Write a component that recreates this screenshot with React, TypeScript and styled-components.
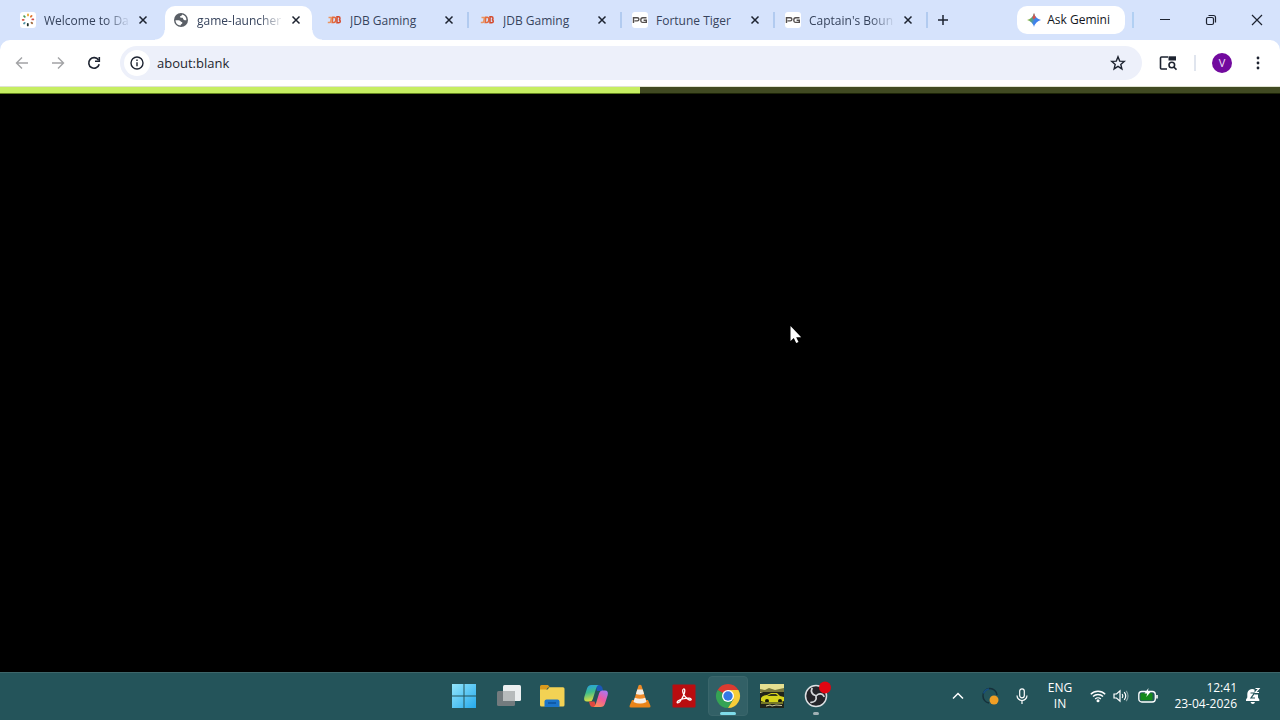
import React from "react";
import styled, { createGlobalStyle, css } from "styled-components";

const GlobalStyle = createGlobalStyle`
  * { box-sizing: border-box; }
  body { margin: 0; background: #000; font-family: "Open Sans", "Noto Sans", sans-serif; }
  button, input { font-family: inherit; margin: 0; }
`;

const Desktop = styled.div`
  display: grid;
  grid-template-rows: auto auto 1fr auto;
  min-height: 100vh;
`;

const TabStrip = styled.header`
  display: flex;
  height: 40px;
  padding-left: 9px;
  background: #d6e3fc;
`;

const TabList = styled.nav`
  display: flex;
  flex: 0 1 918px;
  min-width: 0;
`;

const Tab = styled.div<{ $divider?: boolean }>`
  position: relative;
  flex: 1 1 0;
  min-width: 0;
  display: flex;
  padding: 6px 3px 0;
  ${(p) =>
    p.$divider &&
    css`
      &::after {
        content: "";
        position: absolute;
        right: -1px;
        top: 12px;
        width: 2px;
        height: 16px;
        background: #b2cbf0;
      }
    `}
`;

const TabBody = styled.div<{ $active?: boolean }>`
  position: relative;
  flex: 1;
  min-width: 0;
  display: flex;
  align-items: center;
  height: 34px;
  padding: 0 8px 6px;
  border-radius: 10px 10px 0 0;
  ${(p) =>
    p.$active &&
    css`
      background: #fff;
      &::before,
      &::after {
        content: "";
        position: absolute;
        bottom: 0;
        width: 10px;
        height: 10px;
      }
      &::before {
        left: -10px;
        background: radial-gradient(circle at 0 0, transparent 9px, #fff 10px);
      }
      &::after {
        right: -10px;
        background: radial-gradient(circle at 100% 0, transparent 9px, #fff 10px);
      }
    `}
`;

const TabLink = styled.a<{ $fade?: boolean }>`
  display: flex;
  align-items: center;
  gap: 8px;
  flex: 1;
  min-width: 0;
  color: #36435c;
  font-size: 12px;
  line-height: 16px;
  text-decoration: none;
  svg { flex: none; }
  span {
    flex: 1;
    padding-top: 2px;
    overflow: hidden;
    white-space: nowrap;
    ${(p) => p.$fade && css`mask-image: linear-gradient(90deg, #000 70%, transparent);`}
  }
`;

const IconButton = styled.button<{ $w?: number; $h?: number }>`
  display: flex;
  align-items: center;
  justify-content: center;
  flex: none;
  width: ${(p) => p.$w ?? 16}px;
  height: ${(p) => p.$h ?? 16}px;
  padding: 0;
  border: 0;
  background: none;
  color: #1d2330;
`;

const CloseButton = styled(IconButton)`
  margin-left: 4px;
`;

const WindowTools = styled.div`
  display: flex;
  align-items: center;
  margin-left: auto;
`;

const GeminiButton = styled.button`
  display: flex;
  align-items: center;
  gap: 5px;
  height: 28px;
  padding: 0 15px 0 9px;
  border: 0;
  border-radius: 10px;
  background: #fff;
  color: #12151c;
  font-size: 12px;
  font-weight: 500;
  line-height: 16px;
  white-space: nowrap;
`;

const Separator = styled.span<{ $soft?: boolean }>`
  flex: none;
  width: 2px;
  height: 16px;
  margin: ${(p) => (p.$soft ? "0 16px 0 0" : "0 8px 0 7px")};
  background: ${(p) => (p.$soft ? "#e0e5ee" : "#b2d0f3")};
`;

const ToolbarBack = styled.div`
  background: #d6e3fc;
`;

const Toolbar = styled.div`
  display: flex;
  align-items: center;
  height: 47px;
  padding: 0 4px;
  border-bottom: 1px solid #dfe3d2;
  border-radius: 10px 10px 0 0;
  background: #fff;
`;

const AddressBar = styled.form`
  display: flex;
  align-items: center;
  flex: 1;
  height: 34px;
  margin-left: 8px;
  padding: 0 6px 0 4px;
  border-radius: 17px;
  background: #edf0fa;
`;

const SiteInfo = styled(IconButton)`
  border-radius: 50%;
  background: #fff;
`;

const AddressInput = styled.input`
  flex: 1;
  min-width: 0;
  margin-left: 7px;
  padding: 0;
  border: 0;
  outline: 0;
  background: none;
  color: #24262e;
  font-size: 13px;
  line-height: 20px;
`;

const Avatar = styled.button`
  flex: none;
  width: 20px;
  height: 20px;
  margin-right: 8px;
  padding: 0;
  border: 0;
  border-radius: 50%;
  background: #720a9e;
  color: #f3e3fa;
  font-size: 11px;
  line-height: 20px;
`;

const Page = styled.main`
  position: relative;
  background: #000;
`;

const Progress = styled.div`
  height: 7px;
  background: #414a22;
  border-bottom: 1px solid #1c2407;
`;

const ProgressFill = styled.div`
  height: 7px;
  background: #c6ee62;
  border-bottom: 1px solid #64851f;
`;

const Cursor = styled.svg`
  position: absolute;
  left: 61.7%;
  top: 239px;
`;

const Taskbar = styled.footer`
  display: grid;
  grid-template-columns: 1fr auto 1fr;
  align-items: center;
  height: 48px;
  background: #24545a;
  box-shadow: inset 0 1px #3d666a;
`;

const Apps = styled.nav`
  grid-column: 2;
  display: flex;
  gap: 4px;
`;

const AppButton = styled.button<{ $state?: "active" | "running" }>`
  position: relative;
  display: flex;
  align-items: center;
  justify-content: center;
  width: 40px;
  height: 40px;
  padding: 0;
  border: 1px solid ${(p) => (p.$state === "active" ? "#3a666b" : "transparent")};
  border-radius: 4px;
  background: ${(p) => (p.$state === "active" ? "#326066" : "none")};
  ${(p) =>
    p.$state &&
    css`
      &::after {
        content: "";
        position: absolute;
        bottom: 0;
        left: 50%;
        width: ${p.$state === "active" ? 16 : 6}px;
        height: 3px;
        border-radius: 2px;
        transform: translateX(-50%);
        background: ${p.$state === "active" ? "#7fdcea" : "#a0b0b4"};
      }
    `}
`;

const Tray = styled.div`
  display: flex;
  align-items: center;
  justify-content: flex-end;
  padding-right: 11px;
  color: #fff;
`;

const TrayButton = styled(IconButton)`
  color: #fff;
`;

const TrayText = styled.button<{ $right?: boolean }>`
  width: ${(p) => (p.$right ? 70 : 44)}px;
  padding: 0;
  border: 0;
  background: none;
  color: #fff;
  font-size: 12px;
  line-height: 16px;
  white-space: nowrap;
  display: flex;
  flex-direction: column;
  align-items: ${(p) => (p.$right ? "flex-end" : "center")};
`;

const line = { fill: "none", stroke: "currentColor" } as const;

const DaFavicon = () => (
  <svg width="16" height="16" viewBox="0 0 16 16">
    <rect width="16" height="16" rx="3" fill="#fff" />
    <g strokeWidth="1.800" strokeLinecap="round">
      <path d="M8 2.400v1" stroke="#e7a52c" />
      <path d="M11.600 3.900l-.7.8" stroke="#e07633" />
      <path d="M13.300 7.400h-1" stroke="#cf4b4b" />
      <path d="M12.200 11.200l-.7-.6" stroke="#9f6a3d" />
      <path d="M7.800 12v1.400" stroke="#1f322b" />
      <path d="M4 11.500l.7-.6" stroke="#4f91a5" />
      <path d="M2.700 7.800h1" stroke="#d75443" />
      <path d="M4.100 4.100l.7.8" stroke="#4a9c54" />
    </g>
  </svg>
);

const GlobeFavicon = () => (
  <svg width="16" height="16" viewBox="0 0 16 16">
    <circle cx="8" cy="8" r="7" fill="#5a5f66" />
    <path d="M2.500 8.300c1.500.2 4.300-.4 5 1 .5 1.100 1.900.3 1.900 1.800 0 1-1.600.9-1.900 2.400C4.600 13.400 2.600 11.200 2.500 8.300z" fill="#fff" />
    <path d="M9 2.600c.3 1-.9 1.300-1.700 1.700-1 .5.100 1.700 1.100 1.500 1.300-.3 1.500.2 1.800 1.200.3 1.100 1.900 1.500 3.200 1.200C13.600 5.600 11.900 3.200 9 2.600z" fill="#fff" />
  </svg>
);

const JdbFavicon = () => (
  <svg width="16" height="16" viewBox="0 0 16 16">
    <g fill="none" strokeWidth="1.500">
      <path d="M2.500 5.500h3L4.700 9.500q-.2 1-1.200 1H1.800" stroke="#eb9560" />
      <path d="M6.800 5.300L6.200 10.500h1.600q2 0 2-2.700T7.800 5.300z" stroke="#e36a3d" />
      <path d="M11 4.800v6h1.600q1.700 0 1.700-1.500t-1.500-1.500q1.200 0 1.200-1.500t-1.500-1.500z" stroke="#d4492c" />
    </g>
  </svg>
);

const PgFavicon = () => (
  <svg width="16" height="16" viewBox="0 0 16 16">
    <rect width="16" height="16" rx="3" fill="#fff" />
    <path d="M1.500 11V5.700h3.700q1.700 0 1.700 1.600t-1.700 1.600H2.500M14.500 5.700h-3.700q-2 0-2 2.400t2 2.300h3.500V8.300h-2.700" fill="none" stroke="#55504f" strokeWidth="1.400" />
  </svg>
);

const CloseIcon = () => (
  <svg width="10" height="10" viewBox="0 0 10 10" {...line} strokeWidth="1.500">
    <path d="M1.500 1.500l7 7m0-7l-7 7" />
  </svg>
);

const tabs = [
  { title: "Welcome to Da", icon: <DaFavicon />, fade: true },
  { title: "game-launcher", icon: <GlobeFavicon />, active: true, fade: true },
  { title: "JDB Gaming", icon: <JdbFavicon />, divider: true },
  { title: "JDB Gaming", icon: <JdbFavicon />, divider: true },
  { title: "Fortune Tiger", icon: <PgFavicon />, divider: true },
  { title: "Captain's Boun", icon: <PgFavicon />, divider: true, fade: true },
];

const WindowsLogo = () => (
  <svg width="24" height="24" viewBox="0 0 24 24">
    <defs>
      <linearGradient id="win" x1="0" y1="0" x2="1" y2="1">
        <stop offset="0" stopColor="#93e6fb" />
        <stop offset="1" stopColor="#25a9ec" />
      </linearGradient>
    </defs>
    <path d="M0 0h11.500v11.500H0zM12.500 0H24v11.500H12.500zM0 12.500h11.500V24H0zM12.500 12.500H24V24H12.500z" fill="url(#win)" />
  </svg>
);

const TaskView = () => (
  <svg width="26" height="26" viewBox="0 0 26 26">
    <rect x="8" y="2" width="18" height="16" rx="1.500" fill="#eceff0" />
    <rect x="2" y="8" width="18" height="15" rx="1.500" fill="#737b7e" />
    <path d="M8 8h12v10H8z" fill="#b7bbbc" />
  </svg>
);

const FolderIcon = () => (
  <svg width="26" height="26" viewBox="0 0 26 26">
    <path d="M1 3.500Q1 2 2.500 2H9l2 2.500h-2L7 7H1z" fill="#d99a1d" />
    <path d="M1 6.500h7.500l2-2.300H24q1.500 0 1.500 1.500V22q0 1.500-1.500 1.500H2.500Q1 23.500 1 22z" fill="#f3d254" />
    <path d="M5.500 24v-5.500q0-2 2-2h11q2 0 2 2V24z" fill="#1b74c9" />
    <path d="M9 20h8" stroke="#0d529b" strokeWidth="1.500" />
  </svg>
);

const CopilotIcon = () => (
  <svg width="26" height="26" viewBox="0 0 26 26">
    <defs>
      <linearGradient id="copA" x1="0" y1="0" x2=".2" y2="1">
        <stop offset="0" stopColor="#259ee9" />
        <stop offset=".5" stopColor="#3ebd8a" />
        <stop offset="1" stopColor="#d9dc42" />
      </linearGradient>
      <linearGradient id="copB" x1=".8" y1="0" x2=".3" y2="1">
        <stop offset="0" stopColor="#a878f2" />
        <stop offset=".5" stopColor="#ee59a0" />
        <stop offset="1" stopColor="#fa8f58" />
      </linearGradient>
    </defs>
    <path d="M12.500 2H16q2.500 0 3.300 2.500l.9 3.500H14z" fill="#1c57b8" />
    <path d="M8.500 2h7q-1.500.6-2.200 2.800L9.800 16q-.8 2.500-3 2.500H4Q.3 18.500 1.300 14L4 5.500Q5 2 8.500 2z" fill="url(#copA)" />
    <path d="M13.500 24H10q-2.500 0-3.200-2.500L6 18.500h5.500z" fill="#e0483f" />
    <path d="M17.500 24h-7q1.500-.6 2.200-2.800L16.200 10q.8-2.500 3-2.500H22q3.700 0 2.700 4.500L22 20.500Q21 24 17.500 24z" fill="url(#copB)" />
  </svg>
);

const VlcIcon = () => (
  <svg width="24" height="26" viewBox="0 0 24 26">
    <path d="M4 17h16l2.500 6q.3 1.500-1.500 1.500H3Q1.200 24.500 1.500 23z" fill="#e98418" />
    <path d="M10.500 2.500q1.500-1.300 3 0L18.500 19q-6.500 3.500-13 0z" fill="#ef8b28" />
    <path d="M9.300 6.500h5.400l1.400 4.500q-4.100 1.500-8.200 0zM6.800 14.700q5.200 2 10.400 0l1.300 4.200q-6.500 3.300-13 0z" fill="#f2efe9" />
  </svg>
);

const AcrobatIcon = () => (
  <svg width="24" height="24" viewBox="0 0 24 24">
    <rect x=".5" y=".5" width="23" height="23" rx="1" fill="#b90d10" />
    <path d="M11.500 5c1.800-.6 1.600 3.300.1 6.200-1.700 3.600-4.200 8-6 7.700-1.700-.6 1.300-3.400 6.200-4.300 4.300-.9 7.700-.5 7.400 1-.5 1.600-4.100-.3-6.200-3.200C10.600 9.400 9.900 5.500 11.500 5z" fill="none" stroke="#fff" strokeWidth="1.300" />
  </svg>
);

const ChromeIcon = () => (
  <svg width="26" height="26" viewBox="0 0 26 26">
    <path d="M13 13L2.600 7A12 12 0 0 1 23.400 7z" fill="#db3b30" />
    <path d="M13 13L2.600 7A12 12 0 0 0 13 25l6-10.500z" fill="#35a354" />
    <path d="M13 13V7h10.400A12 12 0 0 1 13 25l5.500-9z" fill="#f7cd38" />
    <circle cx="13" cy="13" r="6" fill="#fff" />
    <circle cx="13" cy="13" r="4.700" fill="#3378e5" />
  </svg>
);

const CarIcon = () => (
  <svg width="26" height="26" viewBox="0 0 26 26">
    <path d="M1 1h24v24H1z" fill="#20241a" />
    <path d="M1 1h24v7l-5-1-4 2-6-2-9 3z" fill="#e5df91" />
    <path d="M1 6l5 1 4-2 6 2 9-2v4H1z" fill="#77773b" />
    <path d="M2 15q2-3 6-3l4-2h6l3 3 4 1v4l-3 1H5l-3-1z" fill="#d5d41c" />
    <path d="M8 13l4-2h5l2 2z" fill="#35391c" />
    <circle cx="8" cy="18" r="2" fill="#15180b" />
    <circle cx="21" cy="18" r="2" fill="#15180b" />
    <path d="M2 19h22v2H2z" fill="#757826" />
    <path d="M7 23l4-1 2 1 4-1 6 .5" stroke="#d3cfa0" fill="none" />
  </svg>
);

const ObsIcon = () => (
  <svg width="30" height="30" viewBox="0 0 30 30">
    <circle cx="15" cy="15" r="10.500" fill="#242429" stroke="#dce0e3" strokeWidth="1.500" />
    <g fill="none" stroke="#d6d9dc" strokeWidth="1.700" strokeLinecap="round">
      <path d="M14.500 14.500C11 13.500 9.500 10.500 11 7.500" />
      <path d="M15.500 14.500c2.500-2.500 6-2 7.500.8" />
      <path d="M15 15.500c1 3.500-1.500 6-5 5.800" />
    </g>
    <circle cx="24" cy="6.500" r="6" fill="#e20612" />
  </svg>
);

const apps: { name: string; icon: React.ReactNode; state?: "active" | "running" }[] = [
  { name: "Start", icon: <WindowsLogo /> },
  { name: "Task view", icon: <TaskView /> },
  { name: "File Explorer", icon: <FolderIcon /> },
  { name: "Copilot", icon: <CopilotIcon /> },
  { name: "VLC media player", icon: <VlcIcon /> },
  { name: "Adobe Acrobat", icon: <AcrobatIcon /> },
  { name: "Google Chrome", icon: <ChromeIcon />, state: "active" },
  { name: "Racing game", icon: <CarIcon /> },
  { name: "OBS Studio", icon: <ObsIcon />, state: "running" },
];

export default function App() {
  return (
    <Desktop>
      <GlobalStyle />
      <TabStrip>
        <TabList aria-label="Open tabs">
          {tabs.map((t, i) => (
            <Tab key={i} $divider={t.divider}>
              <TabBody $active={t.active}>
                <TabLink href="#" $fade={t.fade}>
                  {t.icon}
                  <span>{t.title}</span>
                </TabLink>
                <CloseButton aria-label="Close tab">
                  <CloseIcon />
                </CloseButton>
              </TabBody>
            </Tab>
          ))}
        </TabList>
        <IconButton $w={32} $h={40} aria-label="New tab">
          <svg width="12" height="12" viewBox="0 0 12 12" {...line} strokeWidth="1.500">
            <path d="M6 1v10M1 6h10" />
          </svg>
        </IconButton>
        <WindowTools>
          <GeminiButton>
            <svg width="16" height="16" viewBox="0 0 16 16">
              <defs>
                <linearGradient id="gem" x1="0" y1=".2" x2="1" y2=".6">
                  <stop offset="0" stopColor="#f0c239" />
                  <stop offset=".3" stopColor="#62ad63" />
                  <stop offset=".6" stopColor="#3f83ec" />
                  <stop offset="1" stopColor="#3e78ee" />
                </linearGradient>
              </defs>
              <path d="M8 1Q9.500 6.500 15 8 9.500 9.500 8 15 6.500 9.500 1 8 6.500 6.500 8 1z" fill="url(#gem)" />
              <path d="M8 1Q8.700 4 10 5.500L7.500 7.500 6.300 5.500Q7.500 4 8 1z" fill="#d9534f" />
            </svg>
            Ask Gemini
          </GeminiButton>
          <Separator />
          <IconButton $w={46} $h={40} aria-label="Minimize">
            <svg width="12" height="12" viewBox="0 0 12 12" {...line}>
              <path d="M1 5.500h10" />
            </svg>
          </IconButton>
          <IconButton $w={46} $h={40} aria-label="Restore">
            <svg width="12" height="12" viewBox="0 0 12 12" {...line} strokeWidth="1.200">
              <rect x="1.500" y="3.500" width="7" height="7" rx="1.500" />
              <path d="M3.500 1.500h5q2 0 2 2v5" />
            </svg>
          </IconButton>
          <IconButton $w={46} $h={40} aria-label="Close window">
            <svg width="12" height="12" viewBox="0 0 12 12" {...line} strokeWidth="1.200">
              <path d="M1 1l10 10M11 1L1 11" />
            </svg>
          </IconButton>
        </WindowTools>
      </TabStrip>

      <ToolbarBack>
        <Toolbar>
          <IconButton $w={36} $h={36} aria-label="Back">
            <svg width="14" height="14" viewBox="0 0 14 14" fill="none" stroke="#a2a3a5" strokeWidth="1.400">
              <path d="M13 7H2M7 1.500L1.500 7 7 12.500" />
            </svg>
          </IconButton>
          <IconButton $w={36} $h={36} aria-label="Forward">
            <svg width="14" height="14" viewBox="0 0 14 14" fill="none" stroke="#a2a3a5" strokeWidth="1.400">
              <path d="M1 7h11M7 1.500L12.500 7 7 12.500" />
            </svg>
          </IconButton>
          <IconButton $w={36} $h={36} aria-label="Reload">
            <svg width="14" height="14" viewBox="0 0 14 14" {...line} strokeWidth="1.600">
              <path d="M11.500 4A5.300 5.300 0 1 0 12.200 8.300" />
              <path d="M12.300 1v4.200H8" />
            </svg>
          </IconButton>
          <AddressBar onSubmit={(e) => e.preventDefault()}>
            <SiteInfo type="button" $w={26} $h={26} aria-label="Site information">
              <svg width="14" height="14" viewBox="0 0 14 14" {...line} strokeWidth="1.400">
                <circle cx="7" cy="7" r="6" />
                <path d="M7 6.200v4M7 3.500V5" />
              </svg>
            </SiteInfo>
            <AddressInput aria-label="Address" defaultValue="about:blank" />
            <IconButton type="button" $w={36} $h={32} aria-label="Bookmark this tab">
              <svg width="16" height="16" viewBox="0 0 16 16" {...line} strokeWidth="1.400">
                <path d="M8 1.800l1.700 4.300 4.600.3-3.500 3 1.100 4.500L8 11.400l-3.900 2.500 1.100-4.500-3.500-3 4.600-.3z" />
              </svg>
            </IconButton>
          </AddressBar>
          <IconButton $w={52} $h={36} aria-label="Search page">
            <svg width="18" height="16" viewBox="0 0 18 16" {...line} strokeWidth="1.600">
              <path d="M8 14H2.500Q1.500 14 1.500 13V3Q1.500 2 2.500 2H9" />
              <path d="M9.500 1.300h7.500v4.200H9.500z" fill="currentColor" stroke="none" />
              <circle cx="12.800" cy="10" r="2.800" />
              <path d="M14.800 12l2.700 2.700" />
            </svg>
          </IconButton>
          <Separator $soft />
          <Avatar aria-label="Profile V">V</Avatar>
          <IconButton $w={36} $h={36} aria-label="Menu">
            <svg width="16" height="16" viewBox="0 0 16 16" fill="currentColor">
              <circle cx="8" cy="3" r="1.400" />
              <circle cx="8" cy="8" r="1.400" />
              <circle cx="8" cy="13" r="1.400" />
            </svg>
          </IconButton>
        </Toolbar>
      </ToolbarBack>

      <Page>
        <Progress role="progressbar" aria-label="Loading" aria-valuenow={50}>
          <ProgressFill style={{ width: "50%" }} />
        </Progress>
        <Cursor width="12" height="18" viewBox="0 0 12 18">
          <path d="M.5 0v15l3.300-3 2.400 5 2.300-1-2.300-4.800h5z" fill="#fff" />
        </Cursor>
      </Page>

      <Taskbar>
        <Apps aria-label="Apps">
          {apps.map((a) => (
            <AppButton key={a.name} aria-label={a.name} $state={a.state}>
              {a.icon}
            </AppButton>
          ))}
        </Apps>
        <Tray>
          <TrayButton $w={32} $h={40} aria-label="Show hidden icons">
            <svg width="12" height="8" viewBox="0 0 12 8" {...line} strokeWidth="1.500">
              <path d="M1 6.500l5-5 5 5" />
            </svg>
          </TrayButton>
          <TrayButton $w={32} $h={40} aria-label="Updates">
            <svg width="18" height="18" viewBox="0 0 18 18">
              <path d="M2 9A7 7 0 0 1 16 8M2 9A7 7 0 0 0 8 16" fill="none" stroke="#16303a" strokeWidth="1.500" />
              <path d="M2.500 6.500A7 7 0 0 1 8 2" fill="none" stroke="#174f80" strokeWidth="1.500" />
              <circle cx="13" cy="13" r="4.500" fill="#f09f25" />
            </svg>
          </TrayButton>
          <TrayButton $w={32} $h={40} aria-label="Microphone">
            <svg width="12" height="16" viewBox="0 0 12 16" {...line} strokeWidth="1.200">
              <rect x="3.700" y=".8" width="4.600" height="9" rx="2.300" />
              <path d="M1 7.500a5 5 0 0 0 10 0M6 12.500V16" />
            </svg>
          </TrayButton>
          <TrayText>
            <span>ENG</span>
            <span>IN</span>
          </TrayText>
          <TrayButton $w={31} $h={40} aria-label="Wi-Fi">
            <svg width="16" height="14" viewBox="0 0 16 14" {...line} strokeWidth="1.400">
              <path d="M.8 5.200a10.200 10.200 0 0 1 14.400 0M3 7.600a7 7 0 0 1 10 0M5.200 10a4 4 0 0 1 5.600 0" />
              <circle cx="8" cy="11.800" r="1.500" fill="currentColor" stroke="none" />
            </svg>
          </TrayButton>
          <TrayButton aria-label="Volume">
            <svg width="16" height="14" viewBox="0 0 16 14" {...line} strokeWidth="1.200">
              <path d="M1 5h2.500L7 1.800v10.400L3.500 9H1z" />
              <path d="M9.200 5a3.500 3.500 0 0 1 0 4M11.200 3.200a6 6 0 0 1 0 7.600" />
              <path d="M13.200 1.800a9 9 0 0 1 0 10.400" opacity=".45" />
            </svg>
          </TrayButton>
          <TrayButton $w={38} $h={40} aria-label="Battery">
            <svg width="20" height="16" viewBox="0 0 20 16" {...line} strokeWidth="1.300">
              <rect x=".8" y="3.500" width="16.500" height="10.500" rx="3" />
              <rect x="2.500" y="5.200" width="12" height="7" rx="1" fill="#148a18" stroke="none" />
              <path d="M19 7v3.500" strokeWidth="1.600" />
              <path d="M10.500 0L6.500 5.500h2.700L8.300 9l4.200-5H9.800z" fill="currentColor" stroke="none" />
            </svg>
          </TrayButton>
          <TrayText $right>
            <span>12:41</span>
            <span>23-04-2026</span>
          </TrayText>
          <TrayButton $w={32} $h={40} aria-label="Notifications">
            <svg width="16" height="18" viewBox="0 0 16 18">
              <path d="M1 14v-1.500l1.300-2V7A5 5 0 0 1 9.500 2.500V7.500H13v3l1.300 2V14zM5.500 15h4.500q-.5 2-2.200 2T5.500 15z" fill="#fff" />
              <path d="M5.500 6h4L6 11h4" fill="none" stroke="#24545a" strokeWidth="1.200" />
              <path d="M10.500 1.500H14L10.500 5.500H14" fill="none" stroke="#fff" strokeWidth="1.200" />
            </svg>
          </TrayButton>
        </Tray>
      </Taskbar>
    </Desktop>
  );
}
